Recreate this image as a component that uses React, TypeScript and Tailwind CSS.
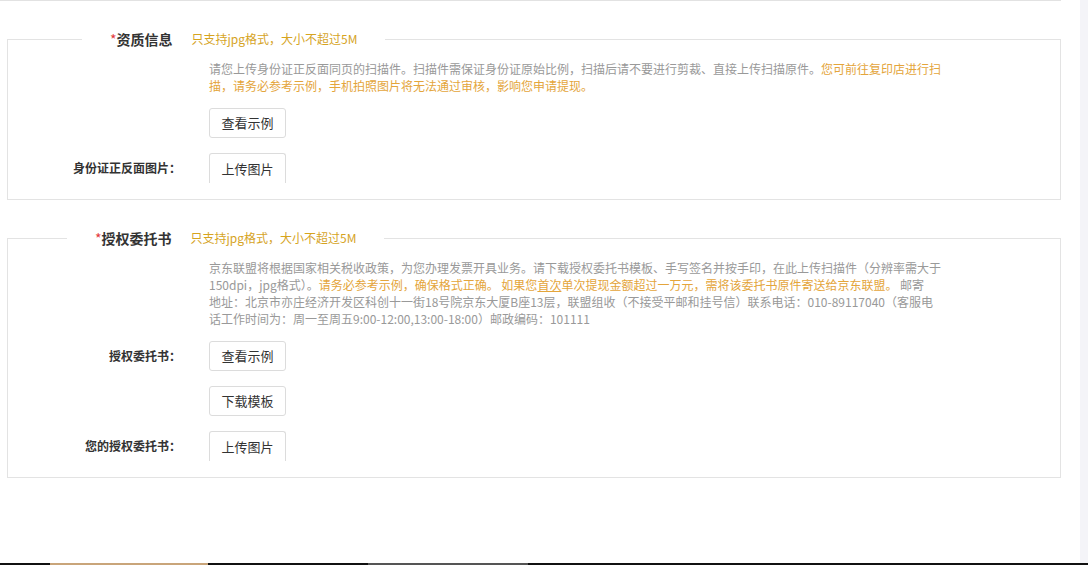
import React from 'react';

const FONT = "font-['Noto_Sans_CJK_SC','Noto_Sans',sans-serif]";

const Btn = ({ label, upload }: { label: string; upload?: boolean }) => (
  <button
    className={`h-[30px] w-[77px] rounded-[3px] border border-[#dcdcdc] bg-white text-[13px] text-[#333] ${
      upload ? 'rounded-b-none border-b-0' : ''
    }`}
  >
    {label}
  </button>
);

const Row = ({ label, children, first }: { label?: string; children: React.ReactNode; first?: boolean }) => (
  <div className={`flex items-center ${first ? 'mt-[14px]' : 'mt-[15px]'}`}>
    <div className="w-[173px] shrink-0 text-right text-[12px] font-bold text-[#333]">{label}</div>
    <div className="ml-[28px]">{children}</div>
  </div>
);

const Section = ({
  title,
  legendLeft,
  desc,
  children,
}: {
  title: string;
  legendLeft: string;
  desc: React.ReactNode;
  children: React.ReactNode;
}) => (
  <fieldset className="mt-[28px] w-[1054px] border border-[#e3e3e3] pb-[16px]">
    <legend className={`${legendLeft} flex h-[20px] items-center px-[28px]`}>
      <span className="text-[14px] leading-[20px] font-bold text-[#333]">
        <span className="font-normal text-[#e4393c]">*</span>
        {title}
      </span>
      <span className="ml-[19px] text-[12px] leading-[20px] text-[#d6a41f]">只支持jpg格式，大小不超过5M</span>
    </legend>
    <div className="mt-[11px] flex">
      <div className="w-[173px] shrink-0" />
      <div className="ml-[28px] w-[740px] text-[12px] leading-[17px] text-[#999]">{desc}</div>
    </div>
    {children}
  </fieldset>
);

export default function App() {
  return (
    <div className={`flex h-[565px] w-[1088px] flex-col overflow-hidden bg-white ${FONT}`}>
      <div className="flex min-h-0 flex-1">
        <div className="flex-1">
          <div className="w-[1061px] border-b border-[#e2e2e2]" />
          <div className="pl-[7px]">
            <Section
              title="资质信息"
              legendLeft="ml-[74px]"
              desc={
                <>
                  请您上传身份证正反面同页的扫描件。扫描件需保证身份证原始比例，扫描后请不要进行剪裁、直接上传扫描原件。
                  <span className="text-[#e4a53b]">
                    您可前往复印店进行扫描，请务必参考示例，手机拍照图片将无法通过审核，影响您申请提现。
                  </span>
                </>
              }
            >
              <Row first>
                <Btn label="查看示例" />
              </Row>
              <Row label="身份证正反面图片：">
                <Btn label="上传图片" upload />
              </Row>
            </Section>

            <Section
              title="授权委托书"
              legendLeft="ml-[59px]"
              desc={
                <>
                  京东联盟将根据国家相关税收政策，为您办理发票开具业务。请下载授权委托书模板、手写签名并按手印，在此上传扫描件（分辨率需大于
                  <br />
                  150dpi，jpg格式）。
                  <span className="text-[#e4a53b]">
                    请务必参考示例，确保格式正确。 如果您<span className="underline">首次</span>
                    单次提现金额超过一万元，需将该委托书原件寄送给京东联盟。
                  </span>{' '}
                  邮寄
                  <br />
                  地址：北京市亦庄经济开发区科创十一街18号院京东大厦B座13层，联盟组收（不接受平邮和挂号信）联系电话：010-89117040（客服电
                  <br />
                  话工作时间为：周一至周五9:00-12:00,13:00-18:00）邮政编码：101111
                </>
              }
            >
              <Row label="授权委托书：" first>
                <Btn label="查看示例" />
              </Row>
              <Row>
                <Btn label="下载模板" />
              </Row>
              <Row label="您的授权委托书：">
                <Btn label="上传图片" upload />
              </Row>
            </Section>
          </div>
        </div>
        <div className="w-[8px] bg-[#f4f4f8]" />
      </div>
      <div className="flex h-[2px] shrink-0 bg-[#111]">
        <div className="ml-[50px] w-[158px] bg-[#c9a57a]" />
        <div className="ml-[160px] w-[160px] bg-[#555]" />
      </div>
    </div>
  );
}
